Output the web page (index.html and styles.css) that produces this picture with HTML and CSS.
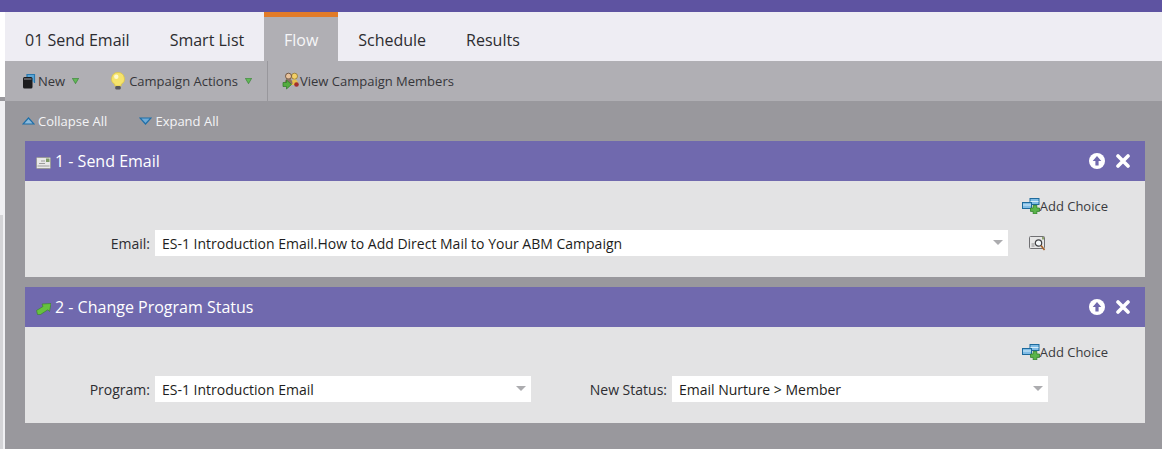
FILE: index.html
```html
<!DOCTYPE html>
<html lang="en">
<head>
<meta charset="utf-8">
<title>01 Send Email - Flow</title>
<link rel="stylesheet" href="styles.css">
</head>
<body>
<div class="topbar"></div>
<div class="shell">
  <div class="rail"></div>
  <main class="main">
    <nav class="tabs">
      <a class="tab">01 Send Email</a>
      <a class="tab">Smart List</a>
      <a class="tab active">Flow</a>
      <a class="tab">Schedule</a>
      <a class="tab">Results</a>
    </nav>
    <div class="toolbar">
      <div class="tool-group">
        <span class="tool">
          <svg class="ico" width="14" height="16" viewBox="0 0 14 16"><path d="M5 4V1.500h7.500V10" fill="#5aa5d6" stroke="#2a78ad" stroke-width="1.200"/><rect x="1" y="4" width="9.500" height="11.500" rx="1.500" fill="#1b1b1d"/><rect x="2" y="5" width="7.500" height="2" fill="#5c5c60"/></svg>
          New<svg class="caret" width="7" height="6" viewBox="0 0 7 6"><path d="M.3.300h6.400L3.500 5.700z" fill="#62b957" stroke="#2f7a2f" stroke-width=".6"/></svg>
        </span>
        <span class="tool">
          <svg class="ico ico-bulb" width="14" height="18" viewBox="0 0 14 18"><path d="M7 .5A6.300 6.300 0 0 0 3.800 12.300V14h6.400v-1.700A6.300 6.300 0 0 0 7 .5z" fill="#f5e36c" stroke="#dcc547" stroke-width=".8"/><circle cx="5.300" cy="4.800" r="2.200" fill="#fdf9cf"/><rect x="4.300" y="14" width="5.400" height="3.500" rx="1.200" fill="#58585c"/></svg>
          Campaign Actions<svg class="caret" width="7" height="6" viewBox="0 0 7 6"><path d="M.3.300h6.400L3.500 5.700z" fill="#62b957" stroke="#2f7a2f" stroke-width=".6"/></svg>
        </span>
      </div>
      <span class="tool tool-members">
        <svg class="ico" width="18" height="18" viewBox="0 0 18 18"><circle cx="12.500" cy="4.200" r="3" fill="#f2d06a" stroke="#8a6d20" stroke-width=".7"/><path d="M9 13c0-4 1.500-5.500 3.500-5.500S16 9 16 13z" fill="#e5c04e"/><circle cx="6.500" cy="4.200" r="3" fill="#e8c39d" stroke="#5c4029" stroke-width=".8"/><path d="M2.500 12c0-4 2-5.500 4-5.500s4 1.500 4 5.500z" fill="#8a7263"/><circle cx="14.500" cy="12.500" r="2.300" fill="#a32e2e"/><path d="M1 10.500h3.500V8L9.500 12.500 4.500 17v-2.500H1z" fill="#53ad3e" stroke="#2d7a25" stroke-width=".7"/></svg>
        View Campaign Members
      </span>
    </div>
    <section class="canvas">
      <div class="expanders">
        <span class="expander"><svg width="13" height="8" viewBox="0 0 13 8"><path d="M6.500 1 12 7H1z" fill="#8dbbdd" stroke="#1f6fa8" stroke-width="1.200"/></svg>Collapse All</span>
        <span class="expander"><svg width="13" height="8" viewBox="0 0 13 8"><path d="M1 1h11L6.500 7z" fill="#6faad6" stroke="#1f6fa8" stroke-width="1.200"/></svg>Expand All</span>
      </div>

      <article class="step">
        <header class="step-head">
          <svg class="step-ico" width="15" height="12" viewBox="0 0 15 12"><rect x=".5" y=".5" width="14" height="11" rx="1" fill="#e8e8e8" stroke="#9a9a9a"/><rect x="10" y="1.500" width="3.500" height="3.500" fill="#7e9a68"/><path d="M5 4h4M3 6.500h6M1.500 9h12" stroke="#9c9c9c"/></svg>
          <h2 class="step-title">1 - Send Email</h2>
          <div class="step-actions">
            <svg width="16" height="16" viewBox="0 0 16 16"><circle cx="8" cy="8" r="8" fill="#fff"/><path d="M8 3 12.300 8H9.600v4.500H6.400V8H3.700z" fill="#7069ae"/></svg>
            <svg width="14" height="14" viewBox="0 0 14 14"><path d="M2 2l10 10M12 2 2 12" stroke="#fff" stroke-width="3.600" stroke-linecap="round"/></svg>
          </div>
        </header>
        <div class="step-body">
          <div class="choice-row">
            <span class="add-choice">
              <svg width="18" height="16" viewBox="0 0 18 16"><rect x="8" y=".5" width="9" height="6" fill="#7fbce6" stroke="#1d6a9c"/><path d="M8.500 3.500h8" stroke="#d6ecf8"/><rect x=".5" y="4.500" width="9" height="6" fill="#7fbce6" stroke="#1d6a9c"/><path d="M1 7h8" stroke="#d6ecf8"/><path d="M8.500 10h2.700V7.300h3.600V10h2.700v3.400h-2.700V16h-3.600v-2.600H8.500z" fill="#5ab54a" stroke="#2e7d2a" stroke-width=".8"/></svg>
              Add Choice
            </span>
          </div>
          <div class="field-row">
            <label class="field-label label-email">Email:</label>
            <div class="select select-email">ES-1 Introduction Email.How to Add Direct Mail to Your ABM Campaign<i class="arrow"></i></div>
            <svg class="lookup" width="17" height="15" viewBox="0 0 17 15"><rect x=".5" y=".5" width="15" height="12" rx="1" fill="#e6e6e6" stroke="#707073"/><path d="M2.500 8h3M2.500 10h3" stroke="#8a8a8c"/><circle cx="9.500" cy="7" r="3.200" fill="#f2f6f8" stroke="#3f3f42" stroke-width="1.200"/><path d="M12 9.500l3.500 4.500" stroke="#a5612a" stroke-width="1.600"/><rect x="13" y="1" width="2" height="2.500" fill="#8fa36e"/></svg>
          </div>
        </div>
      </article>

      <article class="step">
        <header class="step-head">
          <svg class="step-ico" width="15" height="12" viewBox="0 0 15 12"><path d="M.5 7.500 7 3.500 6 1 15 .5 13.500 8.500 11.800 6.800 4.500 11.500H1.500z" fill="#66c23e" stroke="#37812a" stroke-width=".6"/></svg>
          <h2 class="step-title">2 - Change Program Status</h2>
          <div class="step-actions">
            <svg width="16" height="16" viewBox="0 0 16 16"><circle cx="8" cy="8" r="8" fill="#fff"/><path d="M8 3 12.300 8H9.600v4.500H6.400V8H3.700z" fill="#7069ae"/></svg>
            <svg width="14" height="14" viewBox="0 0 14 14"><path d="M2 2l10 10M12 2 2 12" stroke="#fff" stroke-width="3.600" stroke-linecap="round"/></svg>
          </div>
        </header>
        <div class="step-body">
          <div class="choice-row">
            <span class="add-choice">
              <svg width="18" height="16" viewBox="0 0 18 16"><rect x="8" y=".5" width="9" height="6" fill="#7fbce6" stroke="#1d6a9c"/><path d="M8.500 3.500h8" stroke="#d6ecf8"/><rect x=".5" y="4.500" width="9" height="6" fill="#7fbce6" stroke="#1d6a9c"/><path d="M1 7h8" stroke="#d6ecf8"/><path d="M8.500 10h2.700V7.300h3.600V10h2.700v3.400h-2.700V16h-3.600v-2.600H8.500z" fill="#5ab54a" stroke="#2e7d2a" stroke-width=".8"/></svg>
              Add Choice
            </span>
          </div>
          <div class="field-row">
            <label class="field-label label-program">Program:</label>
            <div class="select select-program">ES-1 Introduction Email<i class="arrow"></i></div>
            <label class="field-label label-status">New Status:</label>
            <div class="select select-status">Email Nurture &gt; Member<i class="arrow"></i></div>
          </div>
        </div>
      </article>
    </section>
  </main>
</div>
</body>
</html>
```

FILE: styles.css
```css
* { box-sizing: border-box; }
html, body { margin: 0; height: 100%; overflow: hidden; }
body {
  font-family: "Open Sans", "Liberation Sans", sans-serif;
  background: #99989d;
  color: #232326;
}
.topbar { height: 12px; background: #5e53a1; }
.shell { display: flex; height: 437px; }
.rail {
  width: 5px;
  flex: none;
  background:
    linear-gradient(to right, #d4d4d7 3px, transparent 3px) 0 203px / 100% 100% no-repeat,
    linear-gradient(#fff 0, #fff 85px, #99989d 85px, #99989d 89px, #f0f0f3 89px);
}
.main { flex: 1; min-width: 0; display: flex; flex-direction: column; }

.tabs { height: 49px; flex: none; display: flex; background: #eeedf3; }
.tab {
  display: flex;
  align-items: center;
  padding: 6px 20px 0;
  font-size: 16px;
  color: #2c2c30;
}
.tab.active {
  width: 74px;
  justify-content: center;
  padding: 1px 0 0;
  background: #b0afb4;
  border-top: 5px solid #e27b28;
  color: #f6f6f8;
}

.toolbar {
  height: 40px;
  flex: none;
  display: flex;
  align-items: center;
  background: #b0afb4;
  font-size: 13px;
  color: #36363a;
}
.tool-group {
  width: 263px;
  height: 100%;
  flex: none;
  display: flex;
  align-items: center;
  gap: 32px;
  padding-left: 17px;
  border-right: 1px solid #98979c;
}
.tool { display: flex; align-items: center; white-space: nowrap; }
.tool .ico { margin-right: 2px; }
.tool .ico-bulb { margin-right: 4px; }
.caret { margin-left: 7px; }
.tool-members { margin-left: 14px; }
.tool-members .ico { margin-right: 0; }

.canvas { flex: 1; min-height: 0; padding: 0 17px 0 20px; }
.expanders {
  height: 40px;
  display: flex;
  align-items: center;
  gap: 32px;
  font-size: 13px;
  color: #f4f4f6;
  margin-left: -3px;
}
.expander { display: flex; align-items: center; gap: 3px; white-space: nowrap; }

.step { margin-bottom: 10px; }
.step-head {
  height: 40px;
  display: flex;
  align-items: center;
  padding: 0 15px 0 11px;
  background: #7069ae;
  color: #fff;
}
.step-ico { margin-right: 4px; margin-top: 3px; }
.step-title { margin: 0; font-size: 16px; font-weight: 400; }
.step-actions { margin-left: auto; display: flex; align-items: center; gap: 11px; }
.step-body { height: 96px; background: #e3e3e4; font-size: 14px; }
.choice-row {
  height: 49px;
  display: flex;
  justify-content: flex-end;
  padding: 16px 37px 0 0;
}
.add-choice { display: flex; align-items: center; height: 18px; font-size: 13px; color: #3a3a3e; }
.field-row { display: flex; align-items: center; height: 26px; }
.field-label { color: #2d2d31; text-align: right; }
.select {
  position: relative;
  height: 26px;
  line-height: 28px;
  padding-left: 7px;
  background: #fff;
  color: #1d1d20;
  white-space: nowrap;
}
.arrow {
  position: absolute;
  right: 5px;
  top: 10px;
  border-left: 5px solid transparent;
  border-right: 5px solid transparent;
  border-top: 5px solid #acacaf;
}
.label-email { width: 125px; margin-right: 5px; }
.select-email { width: 853px; }
.lookup { margin-left: 21px; }
.label-program { width: 125px; margin-right: 5px; }
.select-program { width: 376px; }
.label-status { width: 136px; margin-right: 5px; }
.select-status { width: 376px; }
```
